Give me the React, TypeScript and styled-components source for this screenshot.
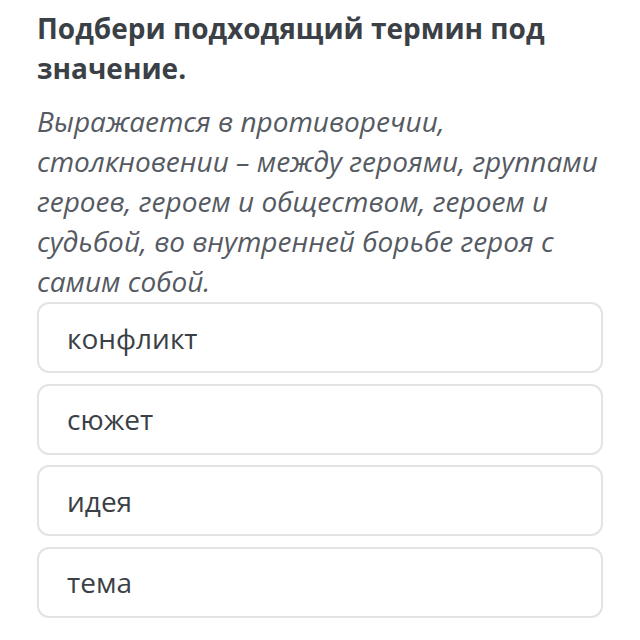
import React from "react";
import styled, { createGlobalStyle } from "styled-components";

const GlobalStyle = createGlobalStyle`
  html, body {
    margin: 0;
    padding: 0;
    background: #ffffff;
  }
  body {
    font-family: "Open Sans", "Noto Sans", sans-serif;
  }
`;

const Page = styled.div`
  width: 640px;
  height: 640px;
  box-sizing: border-box;
  padding: 8px 37px 0;
  overflow: hidden;
`;

const Title = styled.h1`
  margin: 0;
  font-size: 28px;
  line-height: 40px;
  font-weight: 700;
  color: #3b3f46;
`;

const Prompt = styled.p`
  margin: 13px 0 0;
  font-size: 28px;
  line-height: 40px;
  font-style: italic;
  font-weight: 400;
  color: #555a62;
`;

const Options = styled.div`
  display: flex;
  flex-direction: column;
  gap: 10.5px;
  margin-top: 1px;
`;

const Option = styled.div`
  box-sizing: border-box;
  height: 71px;
  display: flex;
  align-items: center;
  padding: 0 28px;
  border: 2px solid #e3e3e3;
  border-radius: 12px;
  font-size: 28px;
  color: #3b3f46;
  background: #fff;
`;

const options = ["конфликт", "сюжет", "идея", "тема"];

export default function App() {
  return (
    <>
      <GlobalStyle />
      <Page>
        <Title>Подбери подходящий термин под значение.</Title>
        <Prompt>
          Выражается в противоречии, столкновении – между героями, группами
          героев, героем и обществом, героем и судьбой, во внутренней борьбе
          героя с самим собой.
        </Prompt>
        <Options>
          {options.map((o) => (
            <Option key={o}>{o}</Option>
          ))}
        </Options>
      </Page>
    </>
  );
}
